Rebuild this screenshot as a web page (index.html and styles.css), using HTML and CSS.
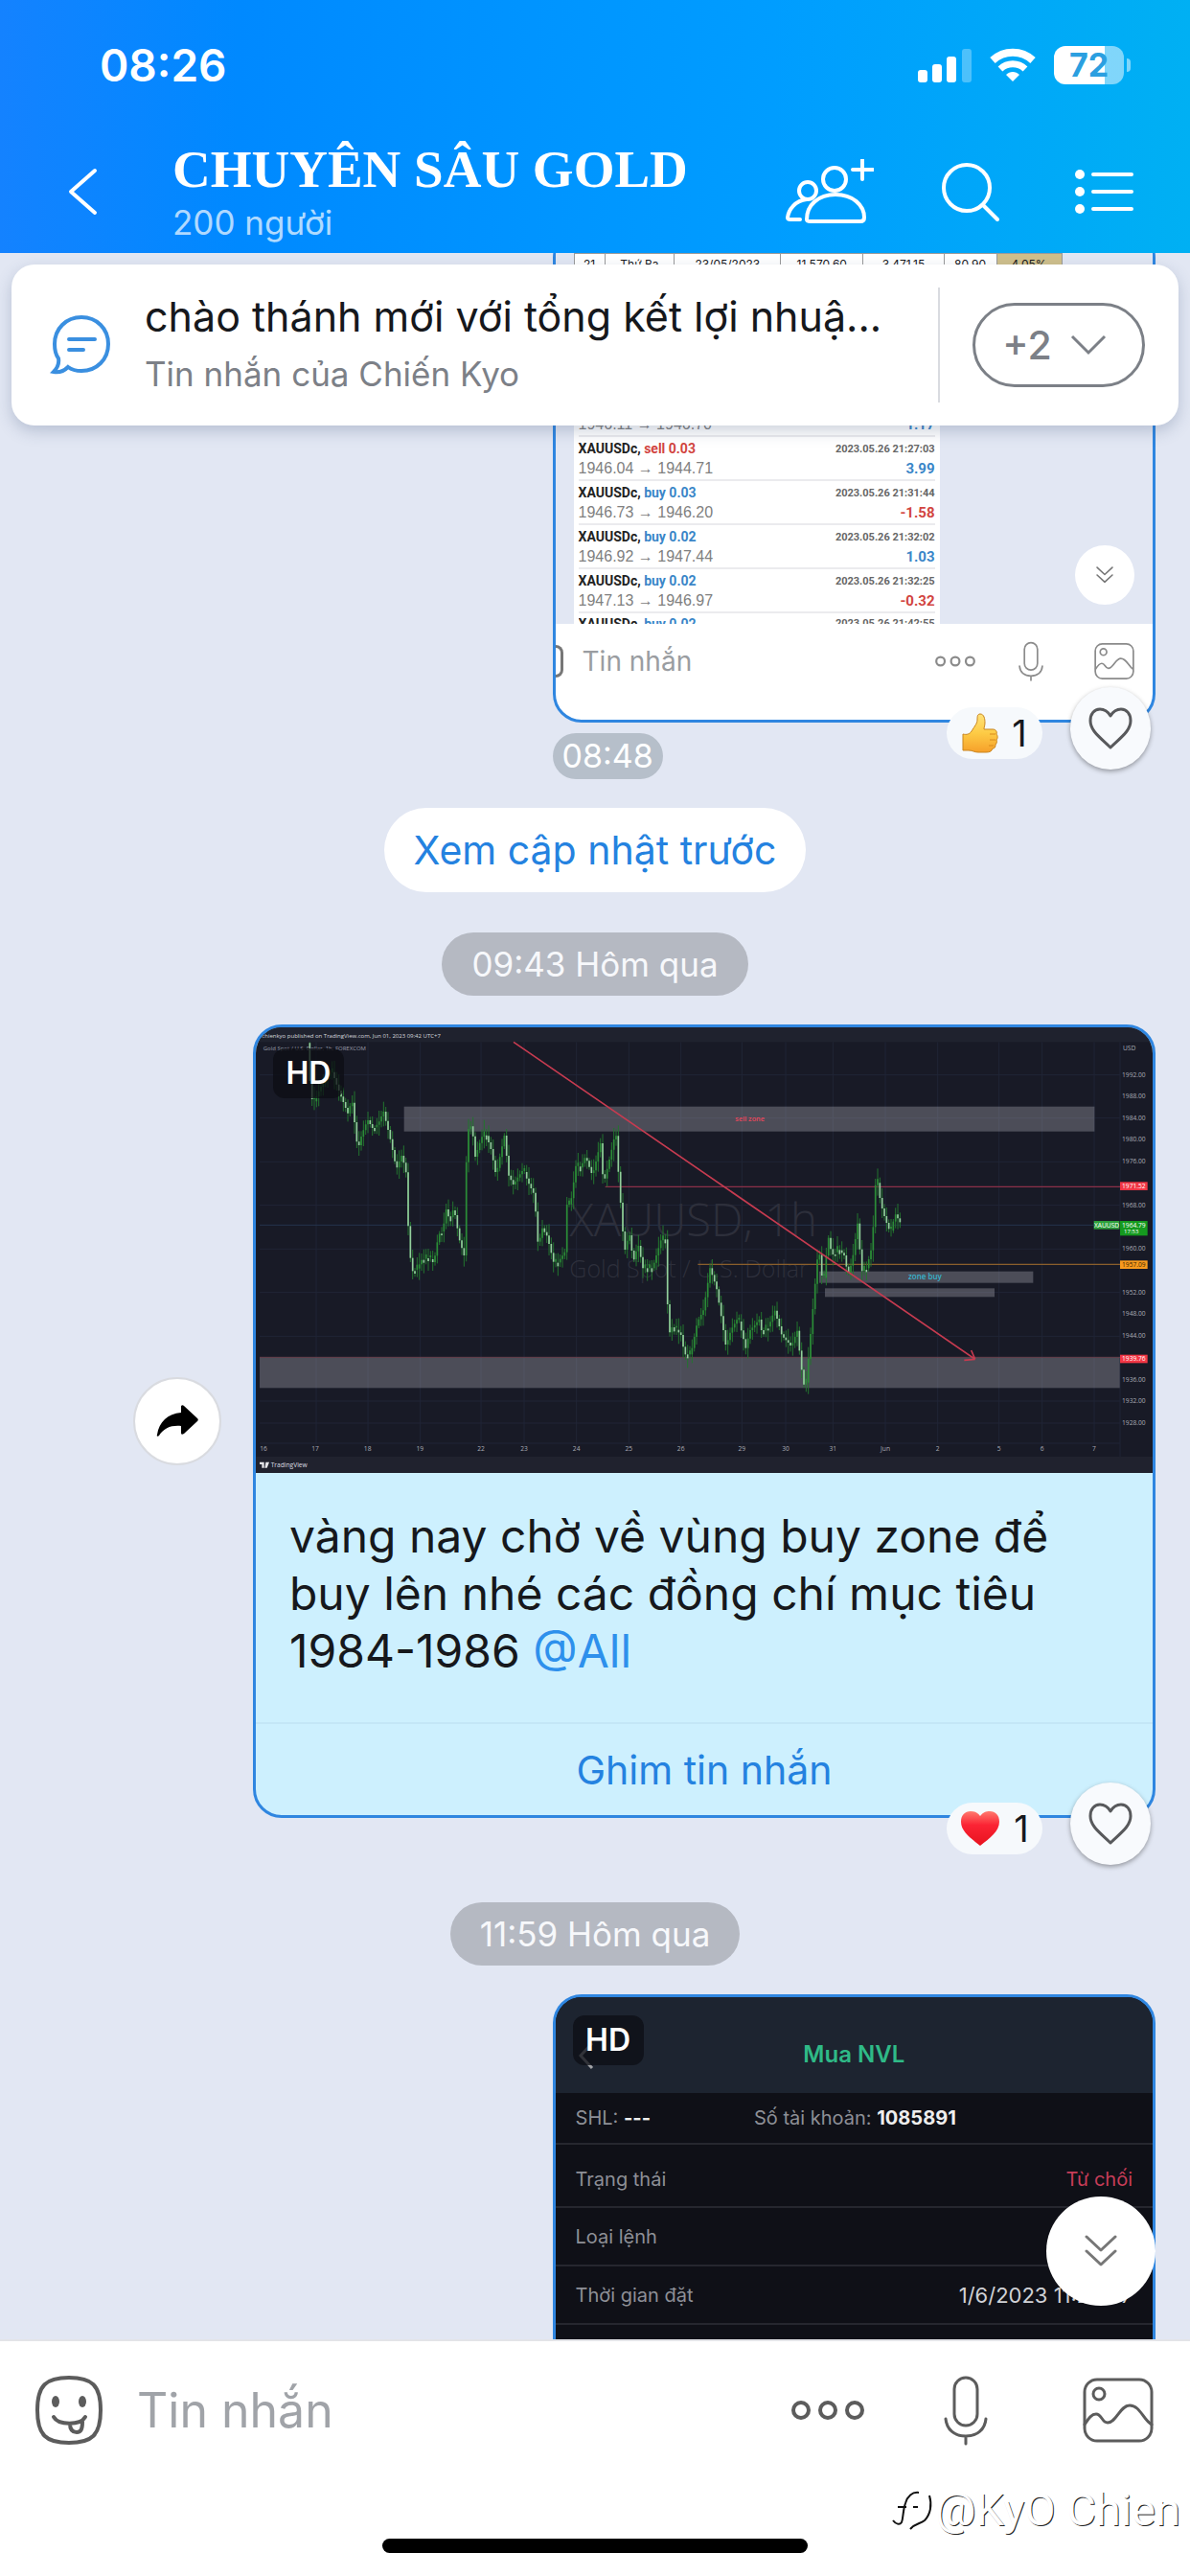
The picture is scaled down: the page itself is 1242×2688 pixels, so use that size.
FILE: index.html
```html
<!DOCTYPE html>
<html lang="vi">
  <head>
    <meta charset="UTF-8" />
    <meta name="viewport" content="width=device-width, initial-scale=1.0" />
    <title>CHUYÊN SÂU GOLD</title>
    <link rel="stylesheet" href="styles.css">
  </head>
  <body>
    <svg class="sprite" aria-hidden="true">
      <symbol id="i-dots" viewBox="0 0 80 24">
        <g fill="none" stroke="currentColor" stroke-width="4">
          <circle cx="12" cy="12" r="8" /><circle cx="40" cy="12" r="8" /><circle cx="68" cy="12" r="8" />
        </g>
      </symbol>
      <symbol id="i-mic" viewBox="0 0 48 74">
        <g fill="none" stroke="currentColor" stroke-width="3" stroke-linecap="round">
          <rect x="12" y="3" width="24" height="50" rx="12" />
          <path d="M3 46c1 11 9 18 21 18s20-7 21-18M24 64v8" />
        </g>
      </symbol>
      <symbol id="i-photo" viewBox="0 0 74 68">
        <g fill="none" stroke="currentColor" stroke-width="3" stroke-linejoin="round">
          <rect x="2" y="2" width="70" height="64" rx="13" />
          <circle cx="17" cy="17" r="6" />
          <path d="M2 49c4-6 7-11 12-11 6 0 6 9 12 9 9 0 13-18 23-18 11 0 14 15 23 20" />
        </g>
      </symbol>
      <symbol id="i-heart" viewBox="0 0 46 44">
        <path d="M23 9C20 4 16 2 12 2 6 2 2 7 2 14c0 11 11 18 21 28 10-10 21-17 21-28 0-7-4-12-10-12-4 0-8 2-11 7z" fill="none" stroke="currentColor" stroke-width="3" stroke-linejoin="round" />
      </symbol>
      <symbol id="i-down" viewBox="0 0 34 36">
        <path d="M2 3l15 14L32 3M2 18l15 14 15-14" fill="none" stroke="currentColor" stroke-width="3" stroke-linecap="round" stroke-linejoin="round" />
      </symbol>
    </svg>

    <header class="top">
      <div class="status">
        <span class="clock">08:26</span>
        <div class="status-icons">
          <svg width="56" height="38" viewBox="0 0 56 38" fill="#fff">
            <rect x="0" y="24" width="10" height="13" rx="3" />
            <rect x="15" y="18" width="10" height="19" rx="3" />
            <rect x="30" y="10" width="10" height="27" rx="3" />
            <rect x="46" y="2" width="10" height="35" rx="3" opacity="0.3" />
          </svg>
          <svg width="48" height="38" viewBox="0 0 48 38" fill="none" stroke="#fff">
            <path d="M3 14a31 31 0 0 1 42 0" stroke-width="8" />
            <path d="M11 23a19 19 0 0 1 26 0" stroke-width="7" />
            <path d="M24 36l-7-7c4-4 10-4 14 0z" fill="#fff" stroke="none" />
          </svg>
          <div class="battery"><span>72</span></div>
        </div>
      </div>
      <div class="nav">
        <button class="icon-btn back" aria-label="Quay lại">
          <svg width="32" height="50" viewBox="0 0 32 50"><path d="M29 3L4 25l25 22" /></svg>
        </button>
        <div class="room">
          <h1>CHUYÊN SÂU GOLD</h1>
          <p>200 người</p>
        </div>
        <div class="actions">
          <button class="icon-btn" aria-label="Thêm thành viên">
            <svg width="92" height="68" viewBox="0 0 92 68">
              <circle cx="51" cy="21" r="12" />
              <path d="M22 63c0-15 12-26 30-26s30 11 30 24c0 2-1 4-4 4H26c-3 0-4-1-4-2z" />
              <circle cx="23" cy="33" r="9" />
              <path d="M22 42C10 43 3 53 2 61c0 1 1 2 3 2h10M80 1v20M70 11h21" />
            </svg>
          </button>
          <button class="icon-btn" aria-label="Tìm kiếm">
            <svg width="62" height="64" viewBox="0 0 62 64"><circle cx="27" cy="28" r="24" /><path d="M44 46l15 15" /></svg>
          </button>
          <button class="icon-btn menu" aria-label="Danh mục">
            <svg width="62" height="48" viewBox="0 0 62 48">
              <path d="M19 6h40M19 24h40M19 42h40" />
              <g fill="#fff" stroke="none"><circle cx="5" cy="6" r="5" /><circle cx="5" cy="24" r="5" /><circle cx="5" cy="42" r="5" /></g>
            </svg>
          </button>
        </div>
      </div>
    </header>

    <main class="chat">
      <section class="pinned">
        <svg class="pin-icon" width="64" height="64" viewBox="0 0 64 64">
          <path d="M33 3c16 0 28 12 28 28S49 59 33 59c-5 0-10-1-14-4-4 4-9 6-15 5 4-4 6-8 5-14-3-4-4-10-4-15C5 15 17 3 33 3zM20 26h27M20 37h15" />
        </svg>
        <div class="pin-text">
          <h2>chào thánh mới với tổng kết lợi nhuậ...</h2>
          <p>Tin nhắn của Chiến Kyo</p>
        </div>
        <div class="pin-more">
          <button>+2
            <svg width="40" height="24" viewBox="0 0 40 24"><path d="M3 3l17 17L37 3" /></svg>
          </button>
        </div>
      </section>

      <div class="messages">
        <div class="message half">
          <article class="bubble shot">
            <div class="shot-chat">
              <table class="ledger">
                <tr><td>20</td><td>Thứ Hai</td><td>22/05/2023</td><td>11.491,20</td><td>3.442,36</td><td>79,40</td><td>3,97%</td></tr>
                <tr><td>21</td><td>Thứ Ba</td><td>23/05/2023</td><td>11.570,60</td><td>3.471,15</td><td>80,90</td><td>4,05%</td></tr>
              </table>
              <ul class="trades">
                <li><b>XAUUSDc, <i class="buy">buy 0.02</i></b><time>2023.05.26 21:25:40</time><span>1946.11 → 1946.70</span><b class="buy">1.17</b></li>
                <li><b>XAUUSDc, <i class="sell">sell 0.03</i></b><time>2023.05.26 21:27:03</time><span>1946.04 → 1944.71</span><b class="buy">3.99</b></li>
                <li><b>XAUUSDc, <i class="buy">buy 0.03</i></b><time>2023.05.26 21:31:44</time><span>1946.73 → 1946.20</span><b class="sell">-1.58</b></li>
                <li><b>XAUUSDc, <i class="buy">buy 0.02</i></b><time>2023.05.26 21:32:02</time><span>1946.92 → 1947.44</span><b class="buy">1.03</b></li>
                <li><b>XAUUSDc, <i class="buy">buy 0.02</i></b><time>2023.05.26 21:32:25</time><span>1947.13 → 1946.97</span><b class="sell">-0.32</b></li>
                <li class="cut"><b>XAUUSDc, <i class="buy">buy 0.02</i></b><time>2023.05.26 21:42:55</time></li>
              </ul>
              <span class="mini-down"><svg width="18" height="20"><use href="#i-down" /></svg></span>
            </div>
            <div class="shot-bar">
              <span class="shot-smile"></span>
              <span class="shot-label">Tin nhắn</span>
              <svg width="44" height="16"><use href="#i-dots" /></svg>
              <svg width="28" height="42"><use href="#i-mic" /></svg>
              <svg width="42" height="40"><use href="#i-photo" /></svg>
            </div>
          </article>
          <div class="reactions">
            <button class="count">
              <svg width="38" height="42" viewBox="0 0 38 42">
                <defs><linearGradient id="thumb" x1="0" y1="0" x2="0" y2="1"><stop offset="0" stop-color="#ffe27a" /><stop offset="0.5" stop-color="#fdcb45" /><stop offset="1" stop-color="#f6a02a" /></linearGradient></defs>
                <path d="M1 22c4 1 7 0 9-3 3-5 6-8 6-12 0-3 0-6 3-6 4 0 5 5 5 9 0 3-1 5-1 7h9c3 0 5 2 4 5 1 1 2 4 0 6 1 2 0 4-1 5 0 3-1 4-3 4-1 3-3 4-7 4h-8c-4 0-6-2-10-2H1z" fill="url(#thumb)" stroke="#c9851f" />
                <path d="M29 22h6M29 28h6M28 34h5" stroke="#d98a1d" fill="none" />
              </svg>1
            </button>
            <button class="like" aria-label="Thả tim"><svg width="46" height="44"><use href="#i-heart" /></svg></button>
          </div>
        </div>
        <div class="half stamp"><time>08:48</time></div>

        <button class="updates">Xem cập nhật trước</button>

        <time class="day">09:43 Hôm qua</time>

        <div class="message wide">
          <button class="share" aria-label="Chia sẻ">
            <svg width="46" height="34" viewBox="0 0 46 34"><path d="M27 1c1-1 2-1 3 0l14 13c1 1 1 2 0 3L30 30c-2 1-3 1-3-1v-7c-10-1-18 2-23 10-1 1-3 1-2-1C4 18 13 9 27 8z" /></svg>
          </button>
          <article class="bubble note">
            <div class="photo">
              <svg class="chart" viewBox="21 36 2808 1395" role="img" aria-label="XAUUSD 1h">
                <rect x="21" y="36" width="2808" height="1395" fill="#181a26" />
                <rect x="21" y="36" width="2808" height="46" fill="#1f222e" />
                <rect x="21" y="1380" width="2808" height="60" fill="#20222e" />
                <path d="M210 82V1340M372 82V1340M536 82V1340M726 82V1340M861 82V1340M1025 82V1340M1189 82V1340M1352 82V1340M1543 82V1340M1680 82V1340M1828 82V1340M1992 82V1340M2156 82V1340M2348 82V1340M2483 82V1340M2646 82V1340M33 185H2727M33 320H2727M33 457H2727M33 593H2727M33 730H2727M33 866H2727M33 1003H2727M33 1206H2727M33 1275H2727M33 1338H2727M2727 82V1380" stroke="#202536" stroke-width="3" />
                <path d="M33 655H2645" stroke="#25344d" stroke-width="3" />
                <g fill="#2d2f3b" class="mark">
                  <text x="1003" y="690" font-size="142">XAUUSD, 1h</text>
                  <text x="1003" y="818" font-size="75">Gold Spot / U.S. Dollar</text>
                </g>
                <g fill="#9a9aa6" fill-opacity="0.4">
                  <rect x="485" y="284" width="2162" height="78" />
                  <rect x="33" y="1070" width="2693" height="95" />
                  <rect x="1785" y="800" width="670" height="36" />
                  <rect x="1803" y="853" width="531" height="27" />
                </g>
                <path d="M1115 535H2727" stroke="#8b3048" stroke-width="4" />
                <path d="M33 1069H2727" stroke="#6d4450" stroke-width="3" />
                <path d="M1405 778H2727" stroke="#8a5f2c" stroke-width="4" />
                <g id="candles"></g>
                <path d="M828 82L2273 1075M2273 1075l-12-28M2273 1075l-34 3" stroke="#c63b50" stroke-width="5" fill="none" />
                <text x="1522" y="330" font-size="22" fill="#e8475c" font-weight="600">sell zone</text>
                <text x="2064" y="826" font-size="24" fill="#36b4cc" font-weight="600">zone buy</text>
                <text x="40" y="68" font-size="18" fill="#d5d6dc">chienkyo published on TradingView.com, Jun 01, 2023 09:42 UTC+7</text>
                <text x="44" y="109" font-size="18" fill="#9a9ca8">Gold Spot / U.S. Dollar, 1h, FOREXCOM</text>
                <g fill="#a9abb5" font-size="20" text-anchor="middle" id="prices"></g>
                <rect x="2727" y="520" width="86" height="26" fill="#f23645" />
                <rect x="2727" y="1061" width="86" height="26" fill="#f23645" />
                <rect x="2727" y="766" width="86" height="26" fill="#f79a1e" />
                <rect x="2645" y="642" width="80" height="26" fill="#2c9f3a" />
                <rect x="2727" y="642" width="86" height="46" fill="#159a1f" />
                <g fill="#fff" font-size="20" text-anchor="middle">
                  <text x="2770" y="540">1971.52</text><text x="2770" y="1081">1939.76</text>
                  <text x="2770" y="786" fill="#402500">1957.09</text><text x="2685" y="662">XAUUSD</text>
                  <text x="2770" y="662">1964.79</text><text x="2762" y="682" font-size="18">17:53</text>
                </g>
                <path d="M33 1397h14v18h-7v-11h-7zM52 1397h11l-7 18h-7z" fill="#e6e6ea" />
                <text x="68" y="1413" font-size="20" fill="#dcdde2">TradingView</text>
              </svg>
              <span class="hd">HD</span>
            </div>
            <p class="text">vàng nay chờ về vùng buy zone để buy lên nhé các đồng chí mục tiêu 1984-1986 <a href="#all">@All</a></p>
            <button class="pin-btn">Ghim tin nhắn</button>
          </article>
          <div class="reactions">
            <button class="count">
              <svg width="42" height="38" viewBox="0 0 42 38">
                <defs><linearGradient id="red" x1="0" y1="0" x2="0" y2="1"><stop offset="0" stop-color="#ff7a6e" /><stop offset="0.4" stop-color="#fb2434" /><stop offset="1" stop-color="#e8121f" /></linearGradient></defs>
                <path d="M21 6C18 2 15 1 11 1 5 1 1 5 1 12c0 10 10 17 20 25 10-8 20-15 20-25 0-7-4-11-10-11-4 0-7 1-10 5z" fill="url(#red)" />
              </svg>1
            </button>
            <button class="like" aria-label="Thả tim"><svg width="46" height="44"><use href="#i-heart" /></svg></button>
          </div>
        </div>

        <time class="day later">11:59 Hôm qua</time>

        <div class="message half">
          <article class="bubble order">
            <header><svg width="20" height="30" viewBox="0 0 20 30"><path d="M16 2L4 15l12 13" /></svg>Mua NVL</header>
            <span class="hd">HD</span>
            <dl>
              <div class="account"><dt>SHL: <b>---</b></dt><dd>Số tài khoản: <b>1085891</b></dd></div>
              <div class="state"><dt>Trạng thái</dt><dd class="rejected">Từ chối</dd></div>
              <div><dt>Loại lệnh</dt><dd></dd></div>
              <div><dt>Thời gian đặt</dt><dd class="when">1/6/2023 11:27:47</dd></div>
            </dl>
          </article>
        </div>
      </div>

      <button class="to-bottom" aria-label="Xuống cuối"><svg width="34" height="36"><use href="#i-down" /></svg></button>
    </main>

    <footer class="composer">
      <div class="compose-row">
        <button class="icon-btn" aria-label="Biểu tượng">
          <svg width="72" height="72" viewBox="0 0 72 72">
            <path d="M36 2c24 0 33 8 33 34s-9 34-33 34S3 62 3 36 12 2 36 2z" />
            <path d="M20 43c5 9 28 9 33 0M37 50c0 6 2 9 7 9s6-4 6-11" />
            <g fill="#5c5c5c" stroke="none"><ellipse cx="22" cy="27" rx="4" ry="6" /><ellipse cx="50" cy="27" rx="4" ry="6" /></g>
          </svg>
        </button>
        <input type="text" placeholder="Tin nhắn" aria-label="Tin nhắn">
        <button class="icon-btn" aria-label="Thêm"><svg width="80" height="24"><use href="#i-dots" /></svg></button>
        <button class="icon-btn" aria-label="Ghi âm"><svg width="48" height="74"><use href="#i-mic" /></svg></button>
        <button class="icon-btn" aria-label="Ảnh"><svg width="74" height="68"><use href="#i-photo" /></svg></button>
      </div>
      <div class="signature">
        <svg width="44" height="46" viewBox="0 0 44 46">
          <path d="M2 34c3 4 7 5 9 2 2-5 1-12 4-20 2-7 7-12 14-11M7 20h9M23 20h5M40 8c3 10 1 20-5 26-5 4-10 3-15 9" />
        </svg>
        <span>@KyO Chien</span>
      </div>
      <div class="home-bar"></div>
    </footer>

    <script src="chart.js"></script>
  </body>
</html>
```
FILE: styles.css
```css
* {
  box-sizing: border-box;
}

body {
  margin: 0;
  height: 100vh;
  display: flex;
  flex-direction: column;
  font-family: Inter, "Noto Sans", sans-serif;
  background: #e2e7f3;
  color: #16181c;
}

h1,
h2,
p,
ul,
dl,
dd {
  margin: 0;
  padding: 0;
}

button {
  font: inherit;
  color: inherit;
  border: none;
  padding: 0;
  background: none;
  cursor: pointer;
}

svg {
  display: block;
  flex-shrink: 0;
}

.sprite {
  position: absolute;
  width: 0;
  height: 0;
}

.icon-btn svg {
  fill: none;
  stroke: currentColor;
  stroke-width: 4;
  stroke-linecap: round;
  stroke-linejoin: round;
}

/* header */
.top {
  height: 264px;
  flex-shrink: 0;
  color: #fff;
  background: linear-gradient(to right, #1482ff, #0089ff 20%, #009dff 65%, #00b0f3);
}

.status {
  height: 136px;
  padding: 0 62px 0 104px;
  display: flex;
  align-items: center;
  justify-content: space-between;
}

.clock {
  font-size: 46px;
  font-weight: 600;
}

.status-icons {
  display: flex;
  align-items: center;
  gap: 19px;
}

.battery {
  position: relative;
  width: 73px;
  height: 40px;
  margin-right: 7px;
  border-radius: 12px;
  background: linear-gradient(to right, #fff 72%, rgba(255, 255, 255, 0.5) 72%);
  color: #2b9fe0;
  font-size: 34px;
  font-weight: 700;
  line-height: 40px;
  text-align: center;
}

.battery::after {
  content: "";
  position: absolute;
  right: -7px;
  top: 13px;
  width: 4px;
  height: 14px;
  border-radius: 0 4px 4px 0;
  background: rgba(255, 255, 255, 0.5);
}

.nav {
  height: 128px;
  padding: 0 58px 0 70px;
  display: flex;
  align-items: center;
}

.room {
  flex: 1;
  margin-left: 78px;
}

.room h1 {
  font-family: "Liberation Serif", serif;
  font-size: 55px;
  line-height: 64px;
}

.room p {
  font-size: 35px;
  line-height: 46px;
  color: rgba(255, 255, 255, 0.7);
}

.actions {
  display: flex;
  align-items: center;
  gap: 70px;
}

.menu {
  margin-left: 8px;
}

/* chat */
.chat {
  position: relative;
  flex: 1;
  min-height: 0;
  overflow: hidden;
}

.pinned {
  position: absolute;
  z-index: 2;
  top: 12px;
  left: 12px;
  right: 12px;
  height: 168px;
  display: flex;
  align-items: center;
  background: #fff;
  border-radius: 24px;
  box-shadow: 0 6px 16px rgba(60, 80, 120, 0.25);
}

.pin-icon {
  margin: 0 35px 0 40px;
  fill: none;
  stroke: #3a8fe0;
  stroke-width: 4;
  stroke-linecap: round;
}

.pin-text {
  flex: 1;
  min-width: 0;
}

.pin-text h2 {
  font-size: 43px;
  font-weight: 400;
  line-height: 60px;
  white-space: nowrap;
}

.pin-text p {
  font-size: 35px;
  line-height: 60px;
  color: #7c8087;
}

.pin-more {
  height: 120px;
  padding: 0 35px 0 34px;
  display: flex;
  align-items: center;
  border-left: 2px solid #d9dbe0;
}

.pin-more button {
  width: 180px;
  height: 88px;
  padding-right: 8px;
  display: flex;
  align-items: center;
  justify-content: center;
  gap: 18px;
  border: 3px solid #7c8087;
  border-radius: 44px;
  color: #7c8087;
  font-size: 41px;
  font-weight: 500;
}

.pin-more svg {
  fill: none;
  stroke: #7c8087;
  stroke-width: 3;
}

.messages {
  height: 100%;
  padding: 0 36px;
  display: flex;
  flex-direction: column;
  align-items: center;
  justify-content: flex-end;
}

.messages > * {
  flex-shrink: 0;
}

.message {
  position: relative;
  align-self: flex-end;
  display: flex;
  align-items: center;
  gap: 33px;
}

.half {
  align-self: flex-end;
  width: 53.8%;
}

.bubble {
  flex: 1;
  overflow: hidden;
  border: 3px solid #2f86e0;
  border-radius: 30px;
}

.reactions {
  position: absolute;
  right: 5px;
  bottom: -49px;
  display: flex;
  align-items: flex-end;
  gap: 29px;
}

.count {
  height: 54px;
  width: 100px;
  margin-bottom: 11px;
  display: flex;
  align-items: center;
  justify-content: center;
  gap: 14px;
  border-radius: 27px;
  background: #f6f9fc;
  font-size: 38px;
}

.like {
  width: 84px;
  height: 86px;
  display: grid;
  place-items: center;
  border-radius: 50%;
  background: #f8fafd;
  color: #58595c;
  box-shadow: 0 2px 5px rgba(0, 0, 0, 0.35);
}

/* first message: a chat with a list of trades */
.shot {
  background: #fff;
}

.shot-chat {
  position: relative;
  padding-left: 19px;
  background: #e2e7f3;
}

.ledger {
  width: 510px;
  border-collapse: collapse;
  background: #fff;
  font-size: 12px;
  line-height: 14px;
  text-align: center;
}

.ledger td {
  height: 22px;
  padding: 0;
  border: 1px solid #9a9a9a;
}

.ledger td:first-child {
  width: 32px;
}

.ledger td:last-child {
  width: 68px;
  background: #cfbf8b;
}

.trades {
  width: 382px;
  margin-top: 123px;
  padding: 0 5px;
  list-style: none;
  background: #fff;
}

.trades li {
  height: 46px;
  display: grid;
  grid-template-columns: 1fr auto;
  grid-template-rows: 21px 20px;
  align-content: center;
  align-items: center;
  border-bottom: 2px solid #ebebee;
  font: 16px "Liberation Sans", sans-serif;
  color: #808080;
}

.trades li.cut {
  height: 11px;
  align-content: start;
  border: none;
  overflow: hidden;
}

.trades b {
  font-family: Roboto, sans-serif;
  font-size: 14px;
  color: #222;
}

.trades b:last-child {
  font-size: 15px;
  text-align: right;
}

.trades i {
  font-style: normal;
}

.trades time {
  font: bold 11px Roboto, sans-serif;
  color: #666;
}

.trades .buy {
  color: #3a86c8;
}

.trades .sell {
  color: #d2453f;
}

.mini-down {
  position: absolute;
  right: 19px;
  bottom: 20px;
  width: 62px;
  height: 62px;
  display: grid;
  place-items: center;
  border-radius: 50%;
  background: #fff;
  color: #777;
}

.shot-bar {
  height: 100px;
  padding: 0 19px 22px 0;
  display: flex;
  align-items: center;
  color: #8b8b8b;
}

.shot-smile {
  width: 8px;
  height: 34px;
  border: 3px solid #777;
  border-left: none;
  border-radius: 0 12px 12px 0;
}

.shot-label {
  flex: 1;
  margin-left: 20px;
  font-size: 28px;
  color: #9a9da1;
}

.shot-bar svg:nth-of-type(2) {
  margin: 0 52px 0 43px;
}

.stamp {
  padding-top: 11px;
}

.stamp time {
  display: inline-block;
  padding: 0 10px;
  border-radius: 24px;
  background: #b6bfca;
  color: #fff;
  font-size: 34px;
  line-height: 48px;
  vertical-align: top;
}

.updates {
  height: 88px;
  margin: 30px 0 42px;
  padding: 0 31px;
  border-radius: 44px;
  background: #fff;
  color: #2482e0;
  font-size: 41px;
}

.day {
  margin-bottom: 30px;
  padding: 0 31px;
  border-radius: 33px;
  background: #b5b9c2;
  color: #f7f8fb;
  font-size: 35px;
  line-height: 66px;
}

.later {
  margin-top: 88px;
}

/* second message */
.wide {
  width: 91.2%;
}

.share {
  width: 92px;
  height: 92px;
  display: grid;
  place-items: center;
  border: 2px solid #d9dbe0;
  border-radius: 50%;
  background: #fff;
}

.note {
  background: #cdf0fe;
}

.photo {
  position: relative;
}

.chart {
  width: 100%;
  height: auto;
  font-family: "Open Sans", sans-serif;
}

.mark {
  font-weight: 300;
}

.hd {
  position: absolute;
  top: 22px;
  left: 18px;
  width: 74px;
  height: 52px;
  border-radius: 12px;
  background: rgba(12, 14, 20, 0.75);
  color: #fff;
  font-size: 32px;
  font-weight: 600;
  line-height: 52px;
  text-align: center;
}

.text {
  padding: 36px 35px 44px;
  font-size: 48px;
  line-height: 60px;
}

.text a {
  color: #2e90ec;
  text-decoration: none;
}

.pin-btn {
  display: block;
  width: 100%;
  height: 97px;
  border-top: 2px solid #c3e6f6;
  color: #2482e0;
  font-size: 41px;
}

/* third message: order details */
.order {
  position: relative;
  height: 360px;
  border-bottom: none;
  border-radius: 30px 30px 0 0;
  background: #0f1017;
  color: #8d8f96;
  font-size: 20px;
}

.order header {
  position: relative;
  height: 100px;
  display: grid;
  place-items: center;
  padding-top: 18px;
  background: #1d2430;
  color: #2fba87;
  font-size: 24px;
  font-weight: 600;
}

.order header svg {
  position: absolute;
  left: 22px;
  top: 46px;
  fill: none;
  stroke: #a0a2a6;
  stroke-width: 3;
}

.order .hd {
  top: 19px;
}

.order dl > div {
  height: 61px;
  padding: 0 21px;
  display: flex;
  align-items: center;
  justify-content: space-between;
  border-bottom: 2px solid #26272f;
}

.order dl > .account {
  height: 54px;
  justify-content: flex-start;
  gap: 108px;
}

.order dl > .state {
  height: 66px;
  padding-top: 8px;
}

.order b {
  color: #eee;
}

.order .rejected {
  color: #c63d58;
}

.order .when {
  color: #d0d1d5;
  font-size: 22px;
}

.to-bottom {
  position: absolute;
  right: 36px;
  bottom: 35px;
  width: 114px;
  height: 114px;
  display: grid;
  place-items: center;
  border-radius: 50%;
  background: #fff;
  color: #777;
}

/* composer */
.composer {
  position: relative;
  height: 247px;
  flex-shrink: 0;
  border-top: 2px solid #e3e4e8;
  background: #fff;
}

.compose-row {
  height: 144px;
  padding: 0 38px 0 36px;
  display: flex;
  align-items: center;
  color: #5c5c5c;
}

.compose-row input {
  flex: 1;
  min-width: 0;
  margin-left: 35px;
  padding: 0;
  border: none;
  outline: none;
  font: inherit;
  font-size: 50px;
}

.compose-row input::placeholder {
  color: #a0a3a8;
  opacity: 1;
}

.compose-row input ~ .icon-btn + .icon-btn {
  margin-left: 80px;
}

.compose-row input ~ .icon-btn:last-child {
  margin-left: 98px;
}

.signature {
  padding-right: 10px;
  display: flex;
  align-items: center;
  justify-content: flex-end;
  gap: 2px;
  color: #fff;
  font: 47px/64px Roboto, sans-serif;
  text-shadow: 1px 1px 0 #222;
}

.signature svg {
  fill: none;
  stroke: #111;
  stroke-width: 2;
}

.home-bar {
  position: absolute;
  left: 50%;
  bottom: 24px;
  width: 444px;
  height: 15px;
  margin-left: -222px;
  border-radius: 8px;
  background: #000;
}
```
FILE: chart.js
```js
// price path of XAUUSD, 1h, in chart units
const path = [
  [190, 85], [200, 255], [210, 270], [230, 225], [265, 170], [290, 240], [318, 310],
  [328, 255], [347, 420], [360, 370], [378, 325], [395, 355], [412, 335], [428, 300],
  [450, 390], [468, 480], [485, 435], [498, 490], [508, 730], [518, 800], [535, 790],
  [545, 765], [570, 755], [585, 775], [600, 685], [615, 670], [622, 600], [635, 640],
  [648, 600], [665, 700], [680, 750], [686, 490], [690, 360], [706, 340], [712, 450],
  [735, 380], [748, 370], [765, 420], [780, 500], [806, 375], [820, 500], [835, 530],
  [845, 510], [866, 480], [880, 520], [900, 560], [912, 720], [925, 665], [940, 690],
  [960, 770], [972, 775], [995, 740], [1003, 570], [1012, 600], [1030, 470], [1045, 475],
  [1060, 440], [1082, 500], [1108, 395], [1116, 530], [1135, 450], [1155, 360],
  [1165, 520], [1182, 740], [1197, 680], [1210, 770], [1225, 715], [1240, 790],
  [1270, 790], [1297, 700], [1315, 700], [1318, 1005], [1333, 970], [1360, 1000],
  [1370, 1060], [1390, 1060], [1410, 960], [1430, 920], [1450, 790], [1470, 850],
  [1485, 940], [1500, 1035], [1515, 985], [1538, 945], [1562, 1040], [1575, 985],
  [1605, 950], [1612, 990], [1635, 970], [1652, 920], [1675, 1000], [1705, 1035],
  [1725, 980], [1732, 1075], [1748, 1180], [1762, 1030], [1778, 850], [1790, 720],
  [1804, 850], [1820, 690], [1832, 750], [1852, 730], [1870, 750], [1882, 810],
  [1895, 770], [1912, 650], [1925, 800], [1940, 790], [1955, 730], [1962, 650],
  [1970, 490], [1985, 590], [2000, 640], [2015, 680], [2030, 620], [2050, 655],
];

const ns = "http://www.w3.org/2000/svg";
const candles = document.getElementById("candles");

function line(x, y1, y2, color, width) {
  const el = document.createElementNS(ns, "path");
  el.setAttribute("d", `M${x} ${y1}V${y2}`);
  el.setAttribute("stroke", color);
  el.setAttribute("stroke-width", width);
  candles.appendChild(el);
}

function priceAt(x) {
  const i = Math.max(1, path.findIndex((p) => p[0] >= x));
  const [x1, y1] = path[i - 1];
  const [x2, y2] = path[i];
  return y1 + ((y2 - y1) * (x - x1)) / (x2 - x1);
}

for (let x = 190, n = 0; x < 2043; x += 7, n++) {
  const open = Math.round(priceAt(x));
  let close = Math.round(priceAt(x + 7));
  if (Math.abs(close - open) < 8) close += n % 2 ? 12 : -12;
  const wick = 8 + ((n * 13) % 29);
  const low = Math.max(open, close) + wick;
  const high = Math.max(82, Math.min(open, close) - wick);
  line(x, high, low, "#23752f", 3);
  line(x, open, close, close > open ? "#93cf9c" : "#2b8c37", 5);
}

const labels = document.getElementById("prices");

function label(x, y, text) {
  const el = document.createElementNS(ns, "text");
  el.setAttribute("x", x);
  el.setAttribute("y", y);
  el.textContent = text;
  labels.appendChild(el);
}

label(2756, 109, "USD");
[
  [1992, 191], [1988, 258], [1984, 327], [1980, 394], [1976, 463], [1968, 600],
  [1960, 736], [1952, 872], [1948, 940], [1944, 1009], [1936, 1145], [1932, 1212],
  [1928, 1281],
].forEach(([price, y]) => label(2770, y, price.toFixed(2)));

[
  [45, "16"], [207, "17"], [371, "18"], [535, "19"], [726, "22"], [861, "23"],
  [1025, "24"], [1189, "25"], [1352, "26"], [1543, "29"], [1680, "30"], [1828, "31"],
  [1992, "Jun"], [2156, "2"], [2348, "5"], [2483, "6"], [2646, "7"],
].forEach(([x, day]) => label(x, 1363, day));
```
